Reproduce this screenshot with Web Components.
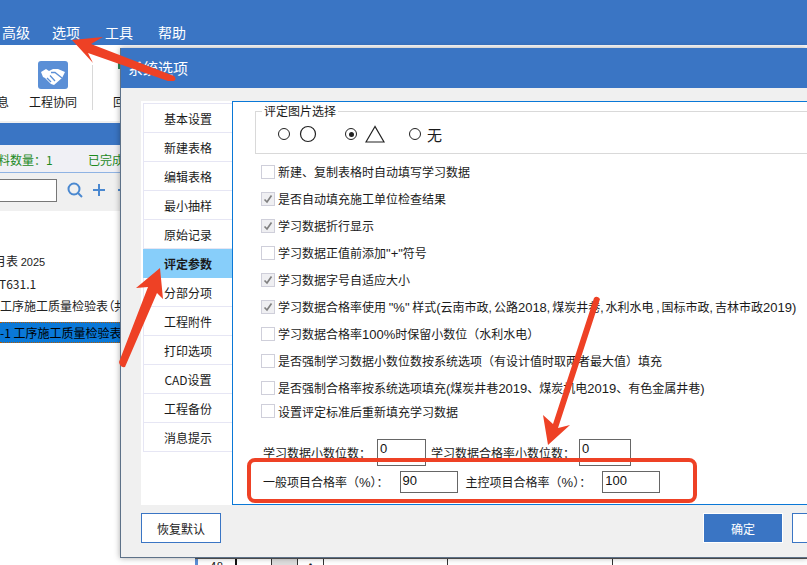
<!DOCTYPE html>
<html lang="zh"><head><meta charset="utf-8">
<style>
html,body{margin:0;padding:0;height:100%;overflow:hidden;background:#fff}
body{width:807px;height:565px;position:relative;font:12px "Noto Sans CJK SC","Liberation Sans",sans-serif;color:#1a1a1a}
.l{font-family:"Liberation Sans",sans-serif;font-size:13px}
.c{font-family:"Liberation Sans",sans-serif;font-size:12px;letter-spacing:2px}
</style></head><body>
<app-shell></app-shell>
<option-dialog style="left:120px;top:48px">
<check-row>新建、复制表格时自动填写学习数据</check-row>
<check-row on>是否自动填充施工单位检查结果</check-row>
<check-row on>学习数据折行显示</check-row>
<check-row>学习数据正值前添加<span class="l">"+"</span>符号</check-row>
<check-row on>学习数据字号自适应大小</check-row>
<check-row on>学习数据合格率使用 <span class="l">"%"</span> 样式<span class="l">(</span>云南市政<span class="c">,</span>公路<span class="l">2018</span><span class="c">,</span>煤炭井巷<span class="c">,</span>水利水电 <span class="c">,</span>国标市政<span class="c">,</span>吉林市政<span class="l">2019)</span></check-row>
<check-row>学习数据合格率<span class="l">100%</span>时保留小数位（水利水电）</check-row>
<check-row>是否强制学习数据小数位数按系统选项（有设计值时取两者最大值）填充</check-row>
<check-row>是否强制合格率按系统选项填充<span class="l">(</span>煤炭井巷<span class="l">2019</span>、煤炭机电<span class="l">2019</span>、有色金属井巷<span class="l">)</span></check-row>
<check-row style="height:22px;margin-top:-1px">设置评定标准后重新填充学习数据</check-row>
</option-dialog>
<mark-up></mark-up>
<script>
function def(name,html){customElements.define(name,class extends HTMLElement{constructor(){super();this.attachShadow({mode:'open'}).innerHTML=html;}});}
const F='"Noto Sans CJK SC","Liberation Sans",sans-serif';

def('app-shell',`<style>
:host{display:flex;flex-direction:column;width:807px;height:565px;overflow:hidden;font:12px ${F}}
.menu{height:45px;flex:none;background:#3a75c4;color:#fff;font-size:14px;display:flex;align-items:flex-end;padding-left:2px;box-sizing:border-box;line-height:20px;padding-bottom:3px}
.tools{flex:none;background:#fff;display:flex;box-sizing:border-box;border-bottom:2px solid #f0f0f0;height:78px}
.tool{width:60px;margin-left:1px;display:flex;flex-direction:column;align-items:center;padding-top:16px;gap:4px}
.tool span{white-space:nowrap;line-height:18px}
.partial{width:22px;padding-top:48px;line-height:18px;overflow:hidden;text-indent:-3px;white-space:nowrap}
.sep{width:1px;height:45px;background:#d8d8d8;margin:20px 0 0 9px}
.back{margin-left:20px;padding-top:48px;line-height:18px;position:relative}
.back i{position:absolute;left:5px;top:18px;width:2px;height:6px;background:#2e8b57}
.band{height:22px;flex:none;background:#3a75c4}
.status{flex:none;background:#f0f0f5;color:#1e8a1e;display:flex;align-items:center;line-height:18px;border-bottom:1px solid #8fb3e3;padding-top:2px;box-sizing:border-box;height:28px}
.status b{font-weight:400;margin-left:-2px;width:90px;white-space:nowrap}
.search{height:38px;flex:none;background:#f0f0f0;display:flex;align-items:flex-start;padding-top:6px;box-sizing:border-box}
.box{width:57px;height:23px;box-sizing:border-box;border:1px solid #777;border-left:0;background:#fff;margin-right:10px}
.search svg{margin-top:3px}
.tree{flex:1;background:#fff;padding-top:7px;min-height:0}
.row{height:22.5px;line-height:22px;font-size:12px;white-space:nowrap;width:120px;overflow:hidden;color:#222}
.row.sel{height:19px;line-height:19px;background:#0a78d7;color:#000;border-top:1px dotted #b35a00;border-bottom:1px dotted #b35a00;margin-top:4.5px}
.num{font-family:"Liberation Sans",sans-serif;font-size:11px}
.strip{height:7px;flex:none;display:flex;box-sizing:border-box;border-top:1px solid #555;margin-left:195px;background:#fff}
.strip div{box-sizing:border-box;border-right:1px solid #333;font-size:12px;line-height:14px;text-align:center;overflow:hidden;flex:none}
</style>
<div class="menu"><span>高级</span><span style="margin-left:22px">选项</span><span style="margin-left:25px">工具</span><span style="margin-left:25px">帮助</span></div>
<div class="tools">
<div class="partial">息</div>
<div class="tool"><svg width="30" height="28" viewBox="0 0 30 28"><rect width="30" height="28" rx="3" fill="#5b8fd6"/><path d="M3 11 8 8l3 2 4-2h5l7 3-3 6-8 7-3-1-6-6-2-1z" fill="#fff"/><path d="M13 11.500h4l7 5.500M9 17l4 4M12 14.500l5 5.500" stroke="#5b8fd6" stroke-width="1.300" fill="none"/></svg><span>工程协同</span></div>
<div class="sep"></div><div class="back"><i></i>回</div></div>
<div class="band"></div>
<div class="status"><b>料数量：1</b><span>已完成</span></div>
<div class="search"><div class="box"></div>
<svg width="16" height="16" viewBox="0 0 16 16" fill="none" stroke="#4a88d0" stroke-width="2"><circle cx="7" cy="7" r="5.500"/><path d="M11 11l4 4"/></svg>
<svg style="margin-left:9px;margin-top:4px" width="14" height="14" viewBox="0 0 14 14" stroke="#4a88d0" stroke-width="2"><path d="M7 1v12M1 7h12"/></svg>
<svg style="margin-left:11px;margin-top:4px" width="14" height="14" viewBox="0 0 14 14" stroke="#4a88d0" stroke-width="2"><path d="M1 7h12"/></svg></div>
<div class="tree">
<div class="row" style="margin-top:32px;text-indent:-6px">月表 <span class="num">2025</span></div>
<div class="row" style="text-indent:-1px">T631.1</div>
<div class="row">工序施工质量检验表<span style="font-feature-settings:'palt'">（</span>共</div>
<div class="row sel">-1 工序施工质量检验表</div>
</div>
<div class="strip"><div style="width:3px;background:#5b8fd6;border:0"></div><div style="width:39px;border-right:2px solid #111;color:#222">48</div><div style="width:35px"></div><div style="width:26px;background:#ddd"></div><div style="width:26px;line-height:11px">·</div><div style="width:124px"></div><div style="width:165px"></div></div>`);

def('nav-item',`<style>
:host{display:flex;align-items:center;justify-content:center;height:28px;border-bottom:1px solid #e6e6f4;border-left:1px solid #e6e6f4;font:12px ${F};color:#1a1a1a;background:#fff;margin-left:2px}
:host([active]){background:#87cefa;font-weight:700;border-color:#87cefa}
</style><slot></slot>`);

def('check-row',`<style>
:host{display:flex;align-items:center;gap:3px;font:12px ${F};color:#1a1a1a;white-space:pre;position:relative;height:27px;margin-left:28px}
i{width:12px;height:12px;border:1px solid #cfcfda;background:#fff;display:flex;flex:none}
svg{display:none}
:host([on]) svg{display:block}
:host([on]) i{background:#efeff2}
span{display:block}
</style><i><svg width="12" height="12" viewBox="0 0 12 12" fill="none" stroke="#808080" stroke-width="1.700"><path d="M2.500 6.500 5 9 9.500 2.500"/></svg></i><span><slot></slot></span>`);

def('field-input',`<style>
:host{display:inline-block;box-sizing:border-box;border:1px solid #666;background:#fff;height:22px;font:13px "Liberation Sans",sans-serif;color:#111;padding:0 0 0 2px;line-height:17px;flex:none}
</style><slot></slot>`);

def('option-dialog',`<style>
:host{position:absolute;display:flex;flex-direction:column;width:687px;height:510px;box-sizing:border-box;background:#f0f0f0;border-left:1px solid #5d7188;border-bottom:1px solid #5d7188;box-shadow:0 0 6px rgba(0,0,0,.35);font:12px ${F}}
.title{height:40px;flex:none;background:#3a75c4;color:#fff;font-size:15px;line-height:40px;padding-left:7px}
.body{display:flex;height:404px;flex:none;margin:13px 0 0 20px;background:#fff}
nav{width:91px;flex:none;padding-top:2px}
nav-item:first-child{border-top:1px solid #e6e6f4}
main{flex:1;border:solid #0a78d7;border-width:1px 0 1px 1px;min-width:0;overflow:hidden;position:relative}
fieldset{margin:3px -40px 0 22px;border:1px solid #d9d9d9;padding:0;height:49px;box-sizing:border-box;display:flex;align-items:center}
legend{margin-left:6px;padding:0 2px;font-size:12px;line-height:12px}
.opts{display:flex;align-items:center;height:28px;font-size:15px;margin-top:-2px}
.radio{width:12px;height:12px;border:1px solid #222;border-radius:50%;box-sizing:border-box;display:flex;align-items:center;justify-content:center;flex:none}
.radio.on::after{content:"";width:5px;height:5px;border-radius:50%;background:#222}
.checks{padding-top:4px}
.nums{display:flex;align-items:center;height:27px;margin:17px 0 0 30px;white-space:nowrap}
.nums2{display:flex;align-items:center;height:21px;margin:5px 0 0 30px;white-space:nowrap}
.l{font:13px "Liberation Sans",sans-serif}
.foot{flex:1;display:flex;align-items:flex-start;padding:8px 0 0 20px}
.btn{box-sizing:border-box;height:30px;display:flex;align-items:center;justify-content:center;font-size:12px;flex:none}
.reset{width:80px;border:1px solid #3a75c4;background:#fff;color:#222}
.ok{width:80px;background:#3a75c4;color:#fff;border:1px solid #fff;margin-left:482px}
.x{width:60px;border:1px solid #3a75c4;background:#fff;margin-left:9px}
</style>
<div class="title">系统选项</div>
<div class="body">
<nav><nav-item>基本设置</nav-item><nav-item>新建表格</nav-item><nav-item>编辑表格</nav-item><nav-item>最小抽样</nav-item><nav-item>原始记录</nav-item><nav-item active>评定参数</nav-item><nav-item>分部分项</nav-item><nav-item>工程附件</nav-item><nav-item>打印选项</nav-item><nav-item>CAD设置</nav-item><nav-item>工程备份</nav-item><nav-item>消息提示</nav-item></nav>
<main>
<fieldset><legend>评定图片选择</legend><div class="opts">
<span class="radio" style="margin-left:22px"></span>
<svg style="margin-left:9px" width="18" height="18" viewBox="0 0 18 18"><circle cx="9" cy="9" r="7.500" fill="none" stroke="#222" stroke-width="1.200"/></svg>
<span class="radio on" style="margin-left:28px"></span>
<svg style="margin-left:8px" width="20" height="18" viewBox="0 0 20 18"><path d="M10 1.500 1 17h18z" fill="none" stroke="#222" stroke-width="1.200"/></svg>
<span class="radio" style="margin-left:24px"></span>
<span style="margin-left:6px">无</span>
</div></fieldset>
<div class="checks"><slot></slot></div>
<div class="nums"><span>学习数据小数位数：</span><field-input style="width:49px;margin-left:6px;height:27px;align-self:flex-start">0</field-input><span style="margin-left:5px">学习数据合格率小数位数：</span><field-input style="width:52px;margin-left:4px;height:27px;align-self:flex-start">0</field-input></div>
<div class="nums2"><span>一般项目合格率（<span class="l">%</span>）：</span><field-input style="width:58px;margin-left:11px">90</field-input><span style="margin-left:8px">主控项目合格率（<span class="l">%</span>）：</span><field-input style="width:58px;margin-left:11px">100</field-input></div>
</main></div>
<div class="foot"><div class="btn reset">恢复默认</div><div class="btn ok">确定</div><div class="btn x"></div></div>`);

def('mark-up',`<style>
:host{position:absolute;left:0;top:0;width:807px;height:565px;pointer-events:none;display:block}
svg{display:block}
</style><svg width="807" height="565" viewBox="0 0 807 565" fill="#ee4125">
<path d="M72 40 103 37 91 44 174 76Q177 79 174 81L168 81 88 53 93 63z"/>
<path d="M160 268 136 288 148 287 119 362Q120 368 125 367L157 293 163 299z"/>
<path d="M548 445 543 415 553 424 594 298Q597 295 600 299L558 428 570 425z"/>
<rect x="249" y="460" width="446" height="41" rx="6" fill="none" stroke="#ee4125" stroke-width="4"/>
</svg>`);
</script>
</body></html>
